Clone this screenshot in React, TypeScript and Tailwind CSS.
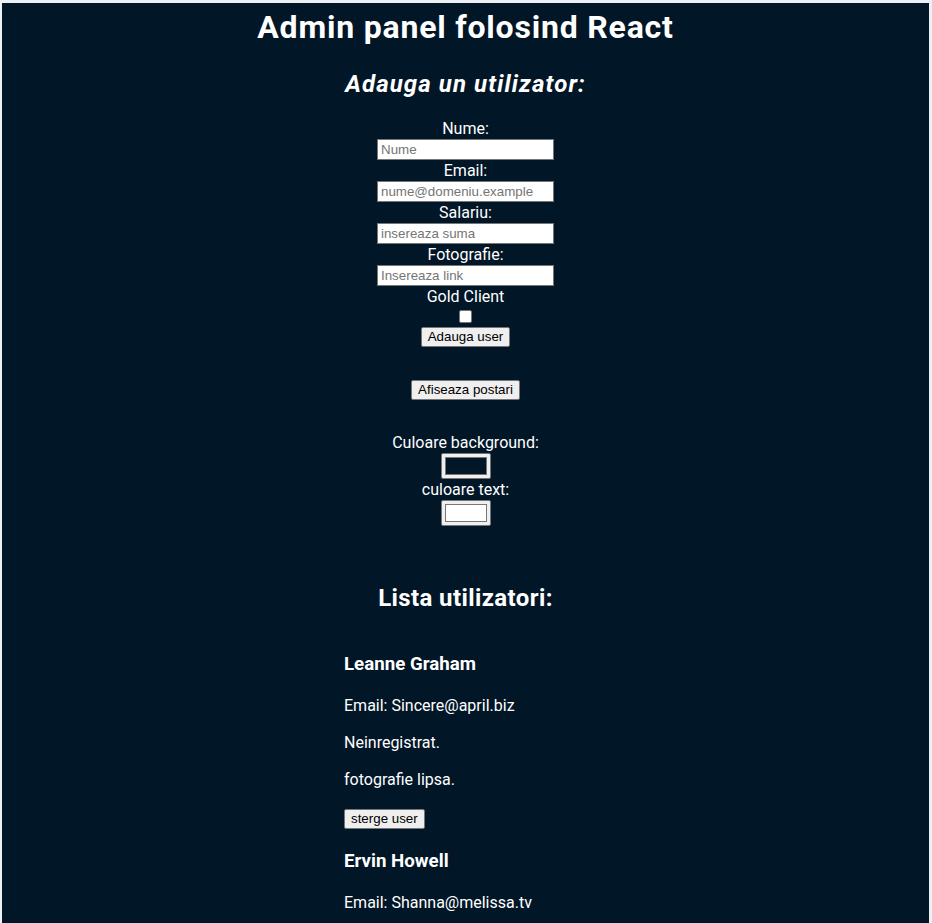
import React from "react";

const users = [
  { name: "Leanne Graham", email: "Sincere@april.biz" },
  { name: "Ervin Howell", email: "Shanna@melissa.tv" },
];

function Field({ label, placeholder }: { label: string; placeholder: string }) {
  return (
    <>
      <label className="block text-[16px] leading-[21px]">{label}</label>
      <input
        type="text"
        placeholder={placeholder}
        className="block w-[177px] h-[21px] bg-white border border-[#767676] px-[3px] text-[13.33px] text-black placeholder:text-[#757575] [font-family:'Liberation_Sans',Arial,sans-serif] outline-none"
      />
    </>
  );
}

function Btn({ children }: { children: React.ReactNode }) {
  return (
    <button className="block h-[20px] px-[6px] bg-[#efefef] border border-[#767676] rounded-[2px] text-[13.33px] leading-[16px] text-black [font-family:'Liberation_Sans',Arial,sans-serif]">
      {children}
    </button>
  );
}

function ColorBox({ color }: { color: string }) {
  return (
    <div className="w-[50px] h-[26px] bg-[#efefef] border border-[#767676] rounded-[2px] flex items-center justify-center">
      <div className="w-[42px] h-[18px] border border-[#777]" style={{ backgroundColor: color }} />
    </div>
  );
}

export default function App() {
  return (
    <div className="bg-[#eef0f3] pt-[3px] pl-[2px] pr-[3px] h-[923px] overflow-hidden">
      <div className="bg-[#011627] text-white h-[920px] [font-family:Roboto,sans-serif]">
        <h1 className="text-center text-[32px] leading-[42px] font-bold pt-[3px] tracking-[0.8px]">
          Admin panel folosind React
        </h1>
        <h2 className="text-center text-[24px] leading-[32px] font-bold italic mt-[20px] tracking-[1.1px]">
          Adauga un utilizator:
        </h2>
        <div className="flex flex-col items-center mt-[18px]">
          <Field label="Nume:" placeholder="Nume" />
          <Field label="Email:" placeholder="nume@domeniu.example" />
          <Field label="Salariu:" placeholder="insereaza suma" />
          <Field label="Fotografie:" placeholder="Insereaza link" />
          <label className="block text-[16px] leading-[21px]">Gold Client</label>
          <div className="mt-[3px] w-[13px] h-[13px] bg-white border border-[#767676] rounded-[2px]" />
          <div className="mt-[4px] flex">
            <Btn>Adauga user</Btn>
          </div>
          <div className="mt-[33px] flex">
            <Btn>Afiseaza postari</Btn>
          </div>
          <div className="mt-[32px] text-[16px] leading-[21px]">Culoare background:</div>
          <ColorBox color="#011627" />
          <div className="text-[16px] leading-[21px]">culoare text:</div>
          <ColorBox color="#ffffff" />
        </div>
        <h2 className="text-center text-[24px] leading-[32px] font-bold mt-[56px] tracking-[0.4px]">
          Lista utilizatori:
        </h2>
        <div className="flex justify-center mt-[38px]">
          <div className="w-[243px]">
            {users.map((u) => (
              <div key={u.name}>
                <h3 className="text-[18.72px] leading-[25px] font-bold">{u.name}</h3>
                <p className="mt-[18px] text-[16px] leading-[21px]">Email: {u.email}</p>
                <p className="mt-[16px] text-[16px] leading-[21px]">Neinregistrat.</p>
                <p className="mt-[16px] text-[16px] leading-[21px]">fotografie lipsa.</p>
                <div className="mt-[19px] mb-[20px] flex">
                  <Btn>sterge user</Btn>
                </div>
              </div>
            ))}
          </div>
        </div>
      </div>
    </div>
  );
}
